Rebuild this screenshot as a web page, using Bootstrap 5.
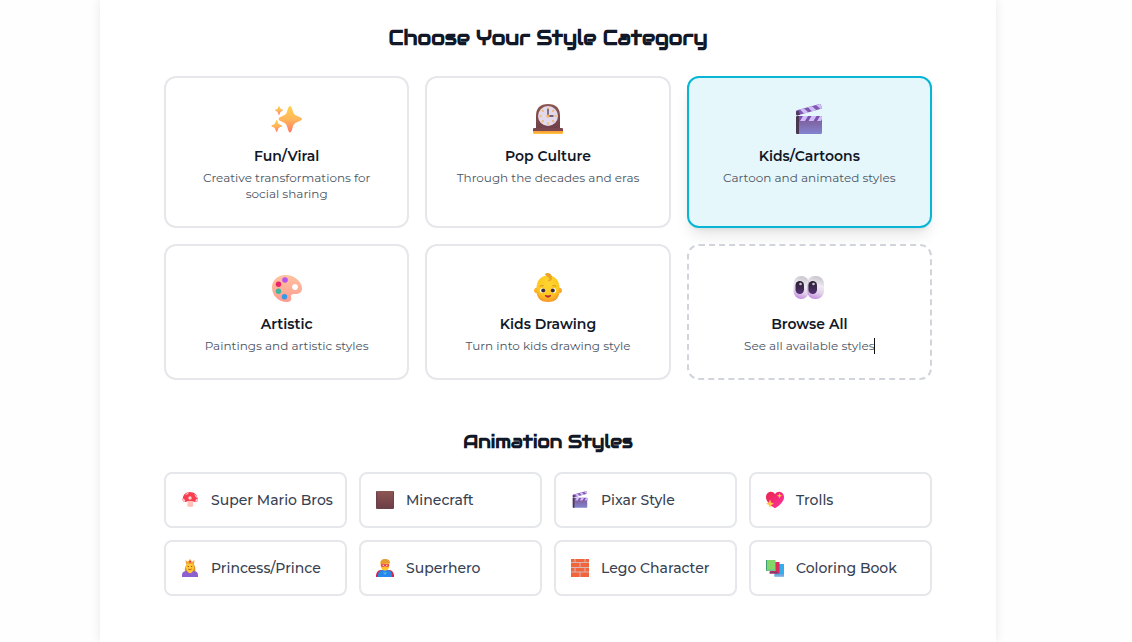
<!DOCTYPE html>
<html lang="en">
<head>
<meta charset="utf-8">
<meta name="viewport" content="width=device-width, initial-scale=1">
<title>Choose Your Style Category</title>
<link href="https://cdn.jsdelivr.net/npm/bootstrap@5.3.0/dist/css/bootstrap.min.css" rel="stylesheet">
<style>
  body { font-family: Montserrat, Inter, sans-serif; background: #fefefe; color: #111827; }
  .page-wrap { padding-right: 36px; }
  .panel { max-width: 896px; background: #fff; box-shadow: 0 0 10px rgba(0, 0, 0, .09); padding: 24px 64px 46px; }
  .main-title, .sub-title { font-family: Audiowide, Orbitron, Inter, sans-serif; font-weight: 700; color: #111827; line-height: 28px; }
  .main-title { font-size: 20px; margin-bottom: 24px; }
  .sub-title { font-size: 18px; margin: 48px 0 16px; }
  .category-btn { border: 2px solid #e5e7eb; border-radius: 12px; background: #fff; padding: 24px; color: #111827; }
  .category-btn:hover { border-color: #67d6e8; }
  .category-btn.active { border-color: #06b6d4; background: #e6f7fc; box-shadow: 0 10px 15px -3px rgba(0, 0, 0, .1), 0 4px 6px -4px rgba(0, 0, 0, .1); }
  .category-btn.browse { border: 2px dashed #d1d5db; }
  .category-btn svg { width: 36px; height: 36px; margin-bottom: 8px; }
  .category-name { font-size: 14px; line-height: 20px; font-weight: 600; margin-bottom: 4px; }
  .category-text { font-size: 12px; line-height: 16px; color: #4b5563; }
  .caret-line { position: absolute; top: 0; right: 0; width: 1px; height: 16px; background: #111; }
  .style-row { --bs-gutter-x: 12px; --bs-gutter-y: 12px; }
  .style-btn { border: 2px solid #e5e7eb; border-radius: 8px; background: #fff; padding: 16px 0 16px 14px; gap: 11px; font-size: 14px; line-height: 20px; font-weight: 500; color: #374151; }
  .style-btn:hover { border-color: #67d6e8; }
  .style-btn svg { width: 20px; height: 20px; }
</style>
</head>
<body>
<svg width="0" height="0" class="position-absolute" aria-hidden="true">
  <defs>
    <linearGradient id="gold" x1="0" y1="0" x2="0" y2="1"><stop offset="0" stop-color="#ffd04d"/><stop offset=".5" stop-color="#ffb65a"/><stop offset="1" stop-color="#ff7a68"/></linearGradient>
    <linearGradient id="wood" x1="0" y1="0" x2="0" y2="1"><stop offset="0" stop-color="#8d5651"/><stop offset="1" stop-color="#704048"/></linearGradient>
    <linearGradient id="amber" x1="0" y1="0" x2="0" y2="1"><stop offset="0" stop-color="#ff9b35"/><stop offset="1" stop-color="#ffc53f"/></linearGradient>
    <linearGradient id="slate" x1="0" y1="0" x2="0" y2="1"><stop offset="0" stop-color="#7e5991"/><stop offset="1" stop-color="#8383d0"/></linearGradient>
    <linearGradient id="peach" x1="0" y1="0" x2="0" y2="1"><stop offset="0" stop-color="#ffc3a0"/><stop offset="1" stop-color="#fd9b91"/></linearGradient>
    <radialGradient id="skin" cx=".5" cy=".3" r=".75"><stop offset="0" stop-color="#ffd633"/><stop offset=".65" stop-color="#ffc61e"/><stop offset="1" stop-color="#f28b2e"/></radialGradient>
    <linearGradient id="eyeball" x1=".6" y1="0" x2=".4" y2="1"><stop offset="0" stop-color="#c9c4cc"/><stop offset=".4" stop-color="#efebf2"/><stop offset=".7" stop-color="#e0d0e8"/><stop offset="1" stop-color="#c58be0"/></linearGradient>
    <linearGradient id="pupil" x1="0" y1="0" x2="0" y2="1"><stop offset="0" stop-color="#29202e"/><stop offset="1" stop-color="#543074"/></linearGradient>
    <linearGradient id="heart" x1="0" y1="0" x2="1" y2="1"><stop offset="0" stop-color="#e9264a"/><stop offset="1" stop-color="#ff33a4"/></linearGradient>
    <symbol id="clapper" viewBox="0 0 36 36">
      <path d="M5 9.500Q5 8.600 6 8.300L28.500 2.100Q29.700 1.800 30 3L31 6.600 6 13.500 5 12.500Z" fill="#8158b0"/>
      <path d="m9 7.500 4-1.100 4.500 4-4.500 1.200zm8-2.200 4-1.100 4.500 4-4.500 1.200zm8-2.200 3.500-1Q29.700 1.800 30 3l1 3.600-1.500.4z" fill="#cfbdf8"/>
      <path d="M5 9.500 7.500 8.800l1.500 3.900-3 .8-1-1Z" fill="#513b65"/>
      <path d="M5 15h26v15.500q0 1.500-1.500 1.500H6.500Q5 32 5 30.500Z" fill="url(#slate)"/>
      <path d="M8 14h22q1 0 1 1v4H8Z" fill="#7d4fae"/>
      <path d="M12 14h5l-3 5H9zm8.500 0h5l-3 5h-5zm8.500 0h1q1 0 1 1v2l-1 2h-4z" fill="#cfbdf8"/>
      <path d="M5 15q0-1 1-1h2v18H6.500Q5 32 5 30.500Z" fill="#493752"/>
    </symbol>
  </defs>
</svg>

<div class="page-wrap">
  <main class="panel mx-auto min-vh-100">
    <h1 class="main-title text-center">Choose Your Style Category</h1>
    <div class="row row-cols-1 row-cols-sm-2 row-cols-md-3 g-3">
      <div class="col">
        <button type="button" class="category-btn w-100 h-100 d-flex flex-column align-items-center">
          <svg viewBox="0 0 36 36" aria-hidden="true"><g fill="url(#gold)"><path d="M21 4Q22.300 4 23.500 8C24.500 12 25.500 13 29 14.300Q33 15.800 33 17T29 19.700C25.500 21 24.500 22 23.500 26Q22.300 30.500 21 30.500T18.500 26C17.500 22 16.500 21 13 19.700Q9.500 18.500 9.500 17T13 14.300C16.500 13 17.500 12 18.500 8Q19.700 4 21 4Z"/><path d="M10 4q.6 0 .9 1.500.5 1.500 1.600 1.800Q14 7.700 14 8.300t-1.500 1q-1.200.4-1.600 2Q10.600 13 10 13t-.9-1.700q-.4-1.600-1.600-2Q6 9 6 8.300t1.500-1q1.200-.3 1.600-1.800Q9.400 4 10 4Z"/><path d="M7.700 18q.7 0 1.100 2 .4 2 2 2.500 2.200.7 2.200 1.400t-2.200 1.300q-1.600.5-2 2.700-.4 2.100-1.100 2.100t-1.100-2.100q-.4-2.200-2-2.700-2.200-.6-2.200-1.300t2.200-1.400q1.600-.5 2-2.500.4-2 1.100-2Z"/></g></svg>
          <span class="category-name">Fun/Viral</span>
          <span class="category-text">Creative transformations for social sharing</span>
        </button>
      </div>
      <div class="col">
        <button type="button" class="category-btn w-100 h-100 d-flex flex-column align-items-center">
          <svg viewBox="0 0 36 36" aria-hidden="true"><path d="M6 27V14Q6 2 18 2t12 12v13Z" fill="url(#wood)"/><circle cx="18" cy="14" r="10" fill="#e2d9ed"/><g stroke="#f3b65f" stroke-width="1.700" stroke-linecap="round"><path d="M18 6v1M18 21v1M10 14h1M25 14h1M12.500 8.500l.6.600M22.900 18.900l.6.600M23.500 8.500l-.6.600M13.100 18.900l-.6.600"/></g><path d="M18 7.500V14h5" fill="none" stroke="#4e3b57" stroke-width="1.300" stroke-linecap="round"/><circle cx="18" cy="14" r="1.600" fill="#ffad45"/><path d="M3 27q0-1 1-1h28q1 0 1 1v3H3Z" fill="#79474d"/><path d="M3 29h30v2q0 1-1 1H4q-1 0-1-1Z" fill="url(#amber)"/></svg>
          <span class="category-name">Pop Culture</span>
          <span class="category-text">Through the decades and eras</span>
        </button>
      </div>
      <div class="col">
        <button type="button" aria-pressed="true" class="category-btn active w-100 h-100 d-flex flex-column align-items-center">
          <svg aria-hidden="true"><use href="#clapper"/></svg>
          <span class="category-name">Kids/Cartoons</span>
          <span class="category-text">Cartoon and animated styles</span>
        </button>
      </div>
      <div class="col">
        <button type="button" class="category-btn w-100 h-100 d-flex flex-column align-items-center">
          <svg viewBox="0 0 36 36" aria-hidden="true"><path fill-rule="evenodd" d="M16 5C24 4.500 33 11 33 18.500 33 22.500 30 24 26.500 24 23 24 21.500 24.500 22 26.500L22.300 29Q22 32 18 32C9 32 3 25 3 17.500S9 5 16 5ZM26 14a3 3 0 1 0 .01 0Z" fill="url(#peach)"/><circle cx="16" cy="10" r="2.800" fill="#b453ee"/><circle cx="9.500" cy="14.300" r="2.700" fill="#ec2467"/><circle cx="9.500" cy="21.300" r="2.700" fill="#3bb7a0"/><circle cx="15.500" cy="26.700" r="2.700" fill="#3798e8"/></svg>
          <span class="category-name">Artistic</span>
          <span class="category-text">Paintings and artistic styles</span>
        </button>
      </div>
      <div class="col">
        <button type="button" class="category-btn w-100 h-100 d-flex flex-column align-items-center">
          <svg viewBox="0 0 36 36" aria-hidden="true"><circle cx="6.800" cy="20.500" r="2.700" fill="#ffb326"/><circle cx="29.200" cy="20.500" r="2.700" fill="#f9a62a"/><path d="M18 5.500Q29.500 6 29.500 19 30 32 18 32T6.500 19Q6.500 6 18 5.500Z" fill="url(#skin)"/><path d="M17 3Q22 3 22 8q0 3.500-5 3.600Q21 9 18.500 7.500 16.500 6 15 4.500 15 3 17 3Z" fill="#e8a52a"/><circle cx="12.500" cy="20.500" r="2.500" fill="#fff"/><circle cx="23.500" cy="20.500" r="2.500" fill="#fff"/><circle cx="13.200" cy="20.500" r="2" fill="#3b2831"/><circle cx="22.800" cy="20.500" r="2" fill="#3b2831"/><path d="M10 16.500q1.500-1.300 3.500-.8M22.500 15.700q2-.5 3.500.8" fill="none" stroke="#d98c25"/><path d="M15 25.500q3 3.300 6 0-3 1-6 0Z" fill="#b92443" stroke="#b92443" stroke-linejoin="round"/></svg>
          <span class="category-name">Kids Drawing</span>
          <span class="category-text">Turn into kids drawing style</span>
        </button>
      </div>
      <div class="col">
        <button type="button" class="category-btn browse w-100 h-100 d-flex flex-column align-items-center">
          <svg viewBox="0 0 36 36" aria-hidden="true"><rect x="2.500" y="6" width="15.500" height="23" rx="7.700" fill="url(#eyeball)"/><rect x="16" y="6" width="17" height="23" rx="8" fill="url(#eyeball)"/><path d="M17.500 10q-2 7.500 0 15 1-7.500 0-15Z" fill="#9a84a5" opacity=".6"/><rect x="4.500" y="11" width="8.500" height="13" rx="4.200" fill="url(#pupil)"/><rect x="17.500" y="11" width="8.500" height="13" rx="4.200" fill="url(#pupil)"/><circle cx="9.500" cy="14" r="1.300" fill="#cfc4d6"/><circle cx="22.500" cy="14" r="1.300" fill="#cfc4d6"/></svg>
          <span class="category-name">Browse All</span>
          <span class="category-text position-relative">See all available styles<span class="caret-line"></span></span>
        </button>
      </div>
    </div>

    <h2 class="sub-title text-center">Animation Styles</h2>
    <div class="row row-cols-1 row-cols-sm-2 row-cols-md-4 style-row">
      <div class="col">
        <button type="button" class="style-btn w-100 d-flex align-items-center text-start text-nowrap">
          <svg viewBox="0 0 20 20" aria-hidden="true"><path d="M7.500 10h5.500v4q1.500 3-2.700 3T7.500 14Z" fill="#ffc1b8"/><path d="M2.500 9.500Q3 2 10 2t8 7.500Q18 12 15.500 12 13 12 12.500 11h-5Q7 12 5 12 2.500 12 2.500 9.500Z" fill="#f93e50"/><circle cx="10" cy="8" r="1.700" fill="#ffd4d6"/><path d="M5.500 4.500Q7 2.500 9 2.300 8.500 4.500 6 5ZM14.500 4q2.500 1.500 3 4-2.500-.5-3-4ZM3 8.500q2.500.5 2 3.500-3.200 0-2-3.500Zm12.500 3.500q-.5-3 2.300-3.300Q18.500 12 15.500 12Z" fill="#ffc8cc"/></svg>
          Super Mario Bros
        </button>
      </div>
      <div class="col">
        <button type="button" class="style-btn w-100 d-flex align-items-center text-start text-nowrap">
          <svg viewBox="0 0 20 20" aria-hidden="true"><rect x="1" y="1" width="18" height="18" rx="1" fill="#6d4149"/><path d="M2 1h16v15.500H3Z" fill="url(#wood)"/></svg>
          Minecraft
        </button>
      </div>
      <div class="col">
        <button type="button" class="style-btn w-100 d-flex align-items-center text-start text-nowrap">
          <svg aria-hidden="true"><use href="#clapper"/></svg>
          Pixar Style
        </button>
      </div>
      <div class="col">
        <button type="button" class="style-btn w-100 d-flex align-items-center text-start text-nowrap">
          <svg viewBox="0 0 20 20" aria-hidden="true"><path d="M10 4.300C13-.2 19 2 19 7.300c0 4.500-5 8.700-9 11C6 16 1 11.800 1 7.300 1 2 7-.2 10 4.300Z" fill="url(#heart)"/><path d="m14.500 3 .8 2 2 .8-2 .8-.8 2-.8-2-2-.8 2-.8ZM5 9.500l1.200 3 2.800 1.200-2.800 1.200L5 18l-1.200-3.100L1 13.700l2.800-1.200Z" fill="#ffc642"/></svg>
          Trolls
        </button>
      </div>
      <div class="col">
        <button type="button" class="style-btn w-100 d-flex align-items-center text-start text-nowrap">
          <svg viewBox="0 0 20 20" aria-hidden="true"><path d="M5 15Q4 5 10 4.500T15.500 15Z" fill="#dc9130"/><path d="M2 19v-2q0-4 5-4h6q5 0 5 4v2Z" fill="#8c61cf"/><path d="M7 13q3 4.500 6 0l-1-1H8Z" fill="#ffca3c"/><ellipse cx="10" cy="9.300" rx="4" ry="4.700" fill="#ffc92d"/><path d="m5.500 2 2.300 1.800L10 1l2.200 2.800L14.500 2 14 6H6Z" fill="#f3a63c"/><circle cx="10" cy="3.700" r="1" fill="#e83155"/><path d="M8.300 11q1.700 1.500 3.400 0" fill="none" stroke="#b5462f" stroke-width=".8"/><circle cx="8.300" cy="8.500" r=".6" fill="#4e3028"/><circle cx="11.700" cy="8.500" r=".6" fill="#4e3028"/></svg>
          Princess/Prince
        </button>
      </div>
      <div class="col">
        <button type="button" class="style-btn w-100 d-flex align-items-center text-start text-nowrap">
          <svg viewBox="0 0 20 20" aria-hidden="true"><path d="M1 19v-2q1-5 5-5h8q4 0 5 5v2Z" fill="#cf244e"/><path d="M3 19v-2Q3.500 12 8 12h4q4.500 0 5 5v2Z" fill="#2688e8"/><ellipse cx="10" cy="7.800" rx="4.300" ry="5" fill="#ffc22f"/><path d="M5.500 6.500Q4.500 1 10 1t5 5L14 5.200Q9 5.500 5.500 6.500Z" fill="#e79c2f"/><path d="M6 6.200h8q.5 2.600-1.700 2.600-1.300 0-2.300-.9-1 .9-2.300.9-2.200 0-1.700-2.600Z" fill="#ea3358"/><circle cx="8.200" cy="7.400" r=".6" fill="#fff"/><circle cx="11.800" cy="7.400" r=".6" fill="#fff"/><path d="m8 14.500 2 2.500 2-2.500Z" fill="#52b8ee"/></svg>
          Superhero
        </button>
      </div>
      <div class="col">
        <button type="button" class="style-btn w-100 d-flex align-items-center text-start text-nowrap">
          <svg viewBox="0 0 20 20" aria-hidden="true"><path d="M1 1h18v18H1Z" fill="#d9b7b4"/><path d="M1 1h3.500v3H1Zm4.500 0h9v3h-9Zm10 0H19v3h-3.500ZM1 5h8.500v4H1Zm9.500 0H19v4h-8.500ZM1 10h3.500v3.500H1Zm4.500 0h9v3.500h-9Zm10 0H19v3.500h-3.500ZM1 14.500h8.500V19H1Zm9.500 0H19V19h-8.500Z" fill="#f1643c"/></svg>
          Lego Character
        </button>
      </div>
      <div class="col">
        <button type="button" class="style-btn w-100 d-flex align-items-center text-start text-nowrap">
          <svg viewBox="0 0 20 20" aria-hidden="true"><path d="M9.500 6H19v12.500H9.500Z" fill="#37acea"/><path d="M9.500 16.500H19v2H9.500Z" fill="#7fa9dd"/><path d="M5 4h9.500v11.500H5Z" fill="#dc2c5d"/><path d="M4.500 13.500h7l2 2h-9Z" fill="#8b366d"/><path d="M1 2h9.500v11H1Z" fill="#83d66a"/><path d="M1 2h1v11H1Z" fill="#409b70"/><path d="M1.500 11.500h9v1.500h-9Z" fill="#69c989"/></svg>
          Coloring Book
        </button>
      </div>
    </div>
  </main>
</div>
<script src="https://cdn.jsdelivr.net/npm/bootstrap@5.3.0/dist/js/bootstrap.bundle.min.js"></script>
</body>
</html>
